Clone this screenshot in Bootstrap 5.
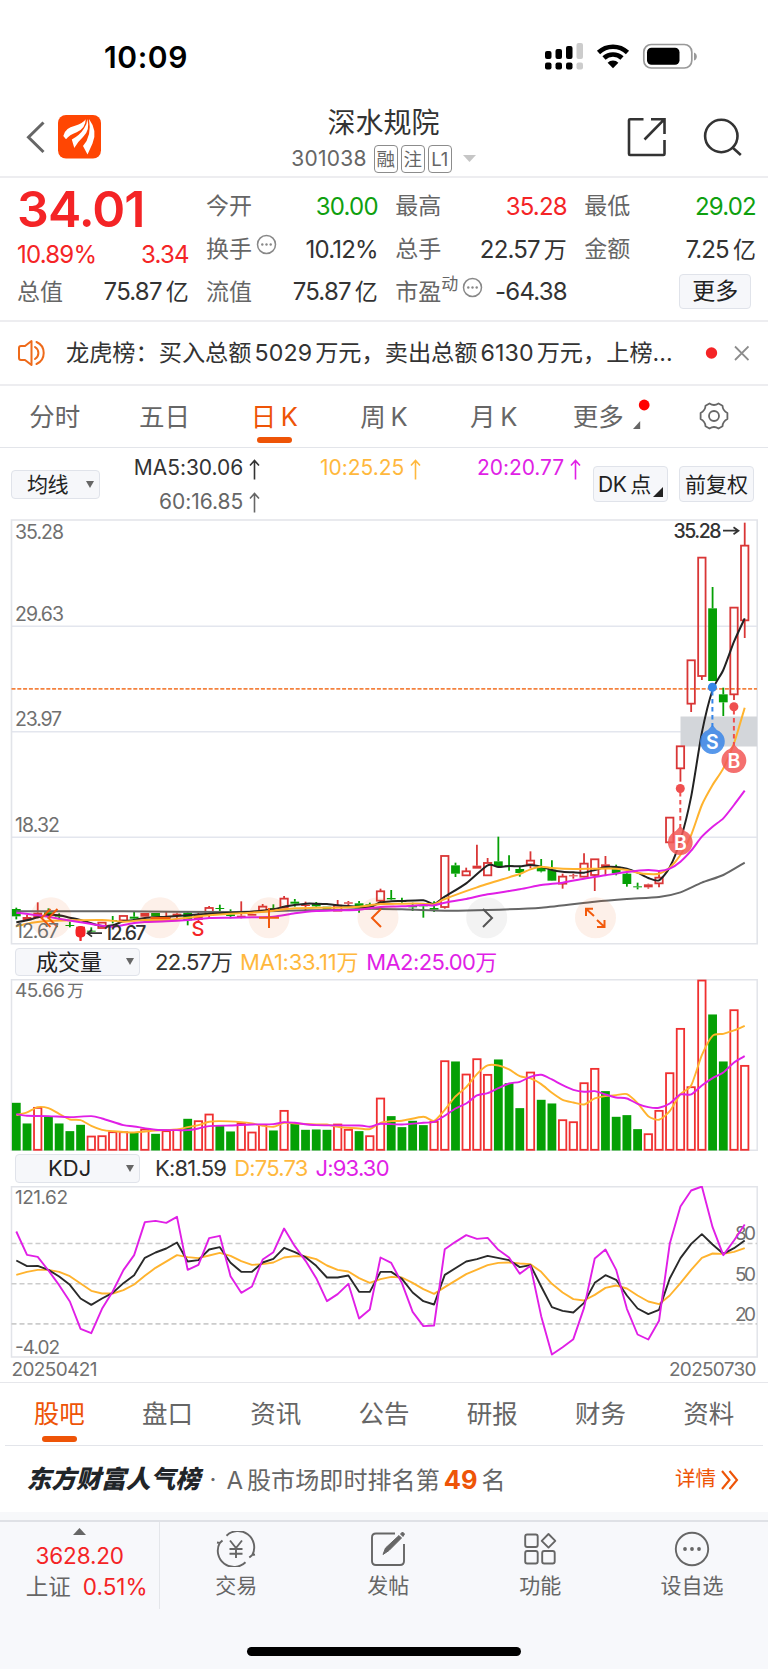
<!DOCTYPE html>
<html lang="zh-CN">
<head>
<meta charset="utf-8">
<meta name="viewport" content="width=device-width, initial-scale=1">
<title>深水规院 301038</title>
<link href="https://cdn.jsdelivr.net/npm/bootstrap@5.3.0/dist/css/bootstrap.min.css" rel="stylesheet">
<style>
:root{--ink:#333;--soft:#666;--up:#f42426;--down:#0fa00f;--brand:#ee5407;--ma10:#ffb83d;--ma20:#e01fe6;--rule:#e9eaee;--fill:#f6f7fa}
body{width:768px;height:1669px;overflow:hidden;background:#fff;color:var(--ink);font-family:Inter,"Noto Sans CJK SC",sans-serif;line-height:1;font-size:23px}
svg{display:block;flex:none}
.up{color:var(--up)}.down{color:var(--down)}.soft{color:var(--soft)}.brand{color:var(--brand)}
.statusbar{height:100px;padding:14px 71px 0 104px}
.clock{font-size:30px;font-weight:600;letter-spacing:.6px;color:#000}
.topbar{height:78px;border-bottom:2px solid #ededf0;padding:0 25px 0 26px}
.title{font-size:28px;line-height:32px}
.code{font-size:21px;gap:3px;letter-spacing:.25px}
.chip{border:1.5px solid #8c8c8c;border-radius:4px;width:24px;height:27.5px;font-size:18.5px;letter-spacing:0}
.quote{height:144px;border-bottom:2px solid #ededf0;display:grid;grid-template-columns:repeat(4,171.7px);column-gap:17.4px;padding:7.5px 0 0 17px;align-content:start}
.cell{height:42.7px;letter-spacing:-.8px}
.cell>span:first-child{letter-spacing:0}
.unit{margin-left:4px;letter-spacing:0}
.num{font-size:24px}
.price{font-size:50px;font-weight:600;letter-spacing:-.9px;height:46px}
.pill{background:var(--fill);border:1.5px solid #e0e3ea;border-radius:4px;color:#222}
.news{height:63.5px;border-bottom:2px solid #ededf0;padding:1px 19px 0 18px;font-size:23.2px}
.news .nm{margin:0 3px;letter-spacing:.1px}
.tabs{height:62.5px;font-size:25.5px;word-spacing:-2.5px}
.tabs>div{flex:1 1 0;height:100%;position:relative}
.tabs .on{color:var(--brand)}
.tabs .on::after{content:"";position:absolute;bottom:4px;width:35px;height:6px;border-radius:3px;background:var(--brand)}
.period{border-bottom:1.5px solid #e3e5ea}
.period .on::after{left:37.5px}
.boards{border-top:1.5px solid #e6e7eb;height:64.5px}
.boards .tabs{height:63px;margin:0 5px;border-bottom:1.5px solid #e3e5ea}
.boards .on::after{left:37px;bottom:2.5px}
.ma{height:70.5px;font-size:21px;letter-spacing:-.5px}
.ma .avgs{width:482px;padding-top:9px;letter-spacing:-.05px}
.ma .avgs div{height:33.5px;white-space:nowrap}
.subhead{height:34.5px;padding:0 15px;font-size:22px}
.subhead .pill{width:125px;height:28.5px;margin-right:15px}
.subhead .vals{letter-spacing:-.6px;gap:8px}
.rank{height:66px;padding:1px 29px 0 26.5px;font-size:24px}
.slogan{font-size:24.8px;font-weight:900;font-style:italic}
.dock{background:#f7f8fb;border-top:2px solid #dfe1e6;height:149px}
.dock .idx{width:160.5px;height:87px;border-right:1.5px solid #e4e6ea}
.dock .act{width:152px;height:87px;font-size:21px;color:var(--soft)}
.homebar{width:274px;height:9px;border-radius:5px;background:#000;margin:37.5px auto 0}
</style>
</head>
<body class="d-flex flex-column m-0">

<div class="statusbar d-flex align-items-center justify-content-between flex-shrink-0">
  <div class="clock">10:09</div>
  <svg width="153" height="28" viewBox="544 43 153 28">
    <g><rect x="545" y="51" width="6.5" height="8" rx="2"/><rect x="555.5" y="49" width="6.5" height="10" rx="2"/><rect x="566" y="46" width="6.5" height="13" rx="2"/><rect x="576.5" y="43" width="6.5" height="16" rx="2" fill="#ccc"/>
    <rect x="545" y="62.5" width="6.5" height="7" rx="2"/><rect x="555.5" y="62.5" width="6.5" height="7" rx="2"/><rect x="566" y="62.5" width="6.5" height="7" rx="2"/><rect x="576.5" y="62.5" width="6.5" height="7" rx="2" fill="#ccc"/></g>
    <path d="M598.5 52.5A21 21 0 0 1 627.5 52.5M604 58A13.2 13.2 0 0 1 622 58" fill="none" stroke="#000" stroke-width="4.6"/>
    <path d="M613 68.2L607.6 62.7A7.8 7.8 0 0 1 618.4 62.7Z"/>
    <rect x="643.8" y="44.5" width="48" height="23.5" rx="7.5" fill="none" stroke="#999" stroke-width="1.7"/><rect x="647" y="47.7" width="32.5" height="17" rx="4.5"/><path d="M694 52.5q2.8 1 2.8 4t-2.8 4z" fill="#999"/>
  </svg>
</div>

<div class="topbar d-flex align-items-center justify-content-between flex-shrink-0">
  <svg width="76" height="46" viewBox="26 115 76 46">
    <path d="M43.5 122.5L28.5 137.3L43.5 152" fill="none" stroke="#666" stroke-width="3"/>
    <rect x="58" y="115" width="43" height="43.5" rx="8" fill="#ff4603"/>
    <path d="M63.300 136Q65 127.700 75 125.700Q82.700 123.700 85.700 119.300Q85.700 128.300 76.700 132.300Q69.300 135 66 139.300ZM74.300 148L71.800 139.500Q80 135 84 128.500Q87.300 123.500 87.300 119Q90.500 130 83 137Q77.500 142 74.300 148ZM87.500 154.500L83 146Q92 136 89 119Q98 131 92.500 143.500Z" fill="#fff"/>
  </svg>
  <div class="d-flex flex-column align-items-center" style="margin-left:38px">
    <div class="title mb-1" style="margin-top:3.500px">深水规院</div>
    <div class="code soft d-flex align-items-center" style="padding-top:2px"><span class="me-1">301038</span><span class="chip d-flex align-items-center justify-content-center">融</span><span class="chip d-flex align-items-center justify-content-center">注</span><span class="chip d-flex align-items-center justify-content-center">L1</span><svg class="ms-2" width="13" height="7" viewBox="0 0 13 7"><path d="M0 0H13L6.500 7Z" fill="#c6c6c6"/></svg></div>
  </div>
  <svg width="116" height="46" viewBox="626 115 116 46" fill="none" stroke="#333" stroke-width="2.6">
    <path d="M642.500 119.200H629q-1 0-1 1V154q0 1 1 1H662.500q1 0 1-1V140M650 119.200H663.500V134M663 119.700L643.500 139.500"/>
    <circle cx="720.3" cy="136" r="16.200"/><path d="M731.500 147.500L739.800 155"/>
  </svg>
</div>

<div class="quote flex-shrink-0">
  <div style="grid-row:1/3;height:85.400px">
    <div class="price up d-flex align-items-center">34.01</div>
    <div class="up num d-flex justify-content-between align-items-center" style="height:47px;letter-spacing:-.8px"><span>10.89%</span><span>3.34</span></div>
  </div>
  <div class="cell d-flex justify-content-between align-items-center"><span class="soft">今开</span><span class="num down">30.00</span></div>
  <div class="cell d-flex justify-content-between align-items-center"><span class="soft">最高</span><span class="num up">35.28</span></div>
  <div class="cell d-flex justify-content-between align-items-center"><span class="soft">最低</span><span class="num down">29.02</span></div>
  <div class="cell d-flex justify-content-between align-items-center"><span class="soft d-flex">换手<svg class="ms-1" width="21" height="21" viewBox="0 0 21 21" style="margin-top:-4px"><use href="#more-dots"/></svg></span><span class="num">10.12%</span></div>
  <div class="cell d-flex justify-content-between align-items-center"><span class="soft">总手</span><span><span class="num">22.57</span><span class="unit">万</span></span></div>
  <div class="cell d-flex justify-content-between align-items-center"><span class="soft">金额</span><span><span class="num">7.25</span><span class="unit">亿</span></span></div>
  <div class="cell d-flex justify-content-between align-items-center"><span class="soft">总值</span><span><span class="num">75.87</span><span class="unit">亿</span></span></div>
  <div class="cell d-flex justify-content-between align-items-center"><span class="soft">流值</span><span><span class="num">75.87</span><span class="unit">亿</span></span></div>
  <div class="cell d-flex justify-content-between align-items-center"><span class="soft d-flex">市盈<small style="font-size:17px;margin-top:-5px">动</small><svg width="21" height="21" viewBox="0 0 21 21" style="margin:-4px 0 0 4px"><use href="#more-dots"/></svg></span><span class="num">-64.38</span></div>
  <div class="cell d-flex justify-content-end align-items-center"><span class="pill d-flex align-items-center justify-content-center" style="width:72.500px;height:35px;margin-right:4.500px;margin-top:-2px">更多</span></div>
</div>

<div class="news d-flex align-items-center flex-shrink-0">
  <svg width="31" height="28" viewBox="18 339.500 31 28" fill="none" stroke="#ee6a1a" stroke-width="2" stroke-linejoin="round"><path d="M31.500 341.500V365.500L25 360.500H21Q19 360.500 19 358.500V348.500Q19 346.500 21 346.500H25ZM35 347.500A7 7 0 0 1 35 359.500M36.500 342.500A12 12 0 0 1 36.500 364.500" stroke-linecap="round"/></svg>
  <span style="margin-left:17px;white-space:nowrap">龙虎榜：买入总额<span class="nm">5029</span>万元，卖出总额<span class="nm">6130</span>万元，上榜...</span>
  <svg class="ms-auto" width="46" height="16" viewBox="702 345.500 46 16"><circle cx="710.500" cy="353.500" r="5.700" fill="#f42426"/><path d="M735.500 347L749 360.500M749 347L735.500 360.500" stroke="#8c8c8c" stroke-width="1.800" transform="translate(-1.500)"/></svg>
</div>

<div class="tabs period soft d-flex flex-shrink-0">
  <div class="d-flex align-items-center justify-content-center">分时</div>
  <div class="d-flex align-items-center justify-content-center">五日</div>
  <div class="on d-flex align-items-center justify-content-center">日 K</div>
  <div class="d-flex align-items-center justify-content-center">周 K</div>
  <div class="d-flex align-items-center justify-content-center">月 K</div>
  <div class="d-flex align-items-center justify-content-center"><span style="margin-left:16px">更多</span><svg style="margin-left:8.500px" width="18" height="36" viewBox="632 399 18 36"><circle cx="644.200" cy="406" r="5.400" fill="red"/><path d="M640.200 422V430H633Z" fill="#666"/></svg></div>
  <div class="d-flex align-items-center justify-content-center"><svg width="32" height="30" viewBox="-17 -15 32 30" fill="none" stroke="#666" stroke-width="1.800"><path d="M-4.500-12.500Q0-9.500 4.500-12.500L8.500-10.300Q8.700-5.500 13.400-3V3Q8.700 5.500 8.500 10.300L4.500 12.500Q0 9.500-4.500 12.500L-8.500 10.300Q-8.700 5.500-13.400 3V-3Q-8.700-5.500-8.500-10.300Z" stroke-linejoin="round"/><circle r="5"/></svg></div>
</div>

<div class="ma d-flex flex-shrink-0">
  <div class="pill d-flex align-items-center justify-content-between" style="width:89px;height:29px;margin:21.500px 0 0 11px;padding:0 5px 0 15px"><span>均线</span><svg width="8" height="7" viewBox="0 0 8 7"><path d="M0 0H8L4 7Z" fill="#666"/></svg></div>
  <div class="avgs d-flex">
    <div class="text-end" style="width:160px"><div>MA5:30.06 <svg class="d-inline-block" width="11" height="21" viewBox="0 0 11 21"><use href="#arrow-up"/></svg></div><div class="soft">60:16.85 <svg class="d-inline-block" width="11" height="21" viewBox="0 0 11 21"><use href="#arrow-up"/></svg></div></div>
    <div class="text-end" style="width:161px;color:var(--ma10)">10:25.25 <svg class="d-inline-block" width="11" height="21" viewBox="0 0 11 21"><use href="#arrow-up"/></svg></div>
    <div class="text-end" style="width:160px;color:var(--ma20)">20:20.77 <svg class="d-inline-block" width="11" height="21" viewBox="0 0 11 21"><use href="#arrow-up"/></svg></div>
  </div>
  <div class="pill d-flex align-items-center position-relative" style="width:75px;height:36px;margin:18px 11px 0 11px;padding-left:4px;word-spacing:-2px;letter-spacing:-.3px">DK 点<svg class="position-absolute end-0 bottom-0 me-1 mb-1" width="10" height="10" viewBox="0 0 10 10"><path d="M10 0V10H0Z" fill="#222"/></svg></div>
  <div class="pill d-flex align-items-center justify-content-center" style="width:75px;height:36px;margin-top:18px;letter-spacing:0">前复权</div>
</div>

<svg id="kline" width="768" height="426" viewBox="0 519 768 426" font-size="19.500">
  <g fill="none" stroke="#e3e6ee" stroke-width="1.600"><path d="M11.500 626.300H757M11.500 731.700H757M11.500 837.300H757"/><path d="M11.500 520V943.800H757.200V520Z" stroke="#e2e4e9"/></g>
  <rect x="680.500" y="716.500" width="76.500" height="30" fill="#d3d6da"/>
  <path d="M11.500 688.800H757" stroke="#f4823f" stroke-width="1.700" stroke-dasharray="4 1.800"/>
  <g class="candles"></g><g class="lines" fill="none" stroke-width="2" stroke-linejoin="round"></g>
  <g fill="#ee5407" fill-opacity=".09"><circle cx="51" cy="917.700" r="20.500"/><circle cx="160" cy="917.700" r="20.500"/><circle cx="269" cy="917.700" r="20.500"/><circle cx="378" cy="917.700" r="20.500"/><circle cx="595.500" cy="917.700" r="20.500"/><circle cx="486.700" cy="917.700" r="20.500" fill="#333" fill-opacity=".06"/></g>
  <g fill="none" stroke="#f25a0c" stroke-width="2"><path d="M50.500 909L41.500 918L50.500 927M57.500 909L48.500 918L57.500 927M150.500 918H170M259 917.700H279M269 908V928M381 909L372 918L381 927"/><path d="M586 916V908.800H593M586.500 909.200L594 916M604.500 920V927H597M604 926.600L597 920"/><path d="M483 909L492 918L483 927" stroke="#555"/></g>
  <g fill="#707070"><text x="15" y="539" textLength="49">35.28</text><text x="15" y="620.500" textLength="49">29.63</text><text x="15" y="726" textLength="47">23.97</text><text x="15" y="832" textLength="45">18.32</text><text x="15" y="938" textLength="44">12.67</text></g>
  <g fill="#333" font-weight="500"><text x="673.500" y="537.500" textLength="48">35.28</text><text x="104" y="939.700" textLength="42.500">12.67</text></g>
  <path d="M723 530.700H738M733.500 527.200L738.500 530.700L733.500 534.200M102 933.200H88M92 929.800L87.500 933.200L92 936.600" fill="none" stroke="#333" stroke-width="1.700"/>
  <path d="M75.500 930.500q0-4.500 5-4.500t5 4.500v2.500q0 4-4 4.500v3.300h-2v-3.300q-4-.5-4-4.500z" fill="#f42426"/>
  <text x="191.500" y="935.500" fill="#f42426" font-size="20" font-weight="500">S</text>
  <g stroke-width="2" stroke-dasharray="4.500 3.500"><path d="M680.300 792V829M733.900 710V746" stroke="#ef4f4f"/><path d="M712.400 691V727" stroke="#3585e8"/></g>
  <circle cx="680.300" cy="788.500" r="4.500" fill="#ef4f4f"/><circle cx="733.900" cy="706.800" r="4.500" fill="#ef4f4f"/><circle cx="712.400" cy="687.300" r="4.500" fill="#3585e8"/>
  <g fill-opacity=".85" font-size="19.500" font-weight="600"><g fill="#f25756"><path d="M680.300 826l4.500 5a12.400 12.400 0 1 1-9 0z"/><path d="M733.900 744l4.500 5a12.400 12.400 0 1 1-9 0z"/></g><path d="M712.400 725l4.500 5a12.400 12.400 0 1 1-9 0z" fill="#3a86e8"/>
  <g fill="#fff" fill-opacity="1" text-anchor="middle"><text x="680.500" y="850">B</text><text x="734" y="768">B</text><text x="712.400" y="749">S</text></g></g>
</svg>

<div class="subhead d-flex align-items-center flex-shrink-0">
  <div class="pill d-flex align-items-center" style="padding:0 5px 0 20px">成交量<svg class="ms-auto" width="8" height="7" viewBox="0 0 8 7"><path d="M0 0H8L4 7Z" fill="#666"/></svg></div>
  <div class="vals d-flex"><span>22.57万</span><span style="color:var(--ma10);letter-spacing:-.25px">MA1:33.11万</span><span style="color:var(--ma20)">MA2:25.00万</span></div>
</div>

<svg id="volume" width="768" height="172" viewBox="0 979.200 768 172" font-size="19">
  <path d="M11.500 980V1150.500H757.200V980Z" fill="none" stroke="#e2e4e9" stroke-width="1.500"/>
  <text x="15" y="997.500" fill="#707070"><tspan textLength="50">45.66</tspan><tspan x="67" font-size="17">万</tspan></text>
  <g class="bars"></g><g class="lines" fill="none" stroke-width="1.900" stroke-linejoin="round"></g>
</svg>

<div class="subhead d-flex align-items-center flex-shrink-0">
  <div class="pill d-flex align-items-center" style="padding:0 5px 0 32px">KDJ<svg class="ms-auto" width="8" height="7" viewBox="0 0 8 7"><path d="M0 0H8L4 7Z" fill="#666"/></svg></div>
  <div class="vals d-flex" style="letter-spacing:-.8px"><span>K:81.59</span><span style="color:var(--ma10)">D:75.73</span><span style="color:var(--ma20)">J:93.30</span></div>
</div>

<svg id="kdj" width="768" height="196" viewBox="0 1185.500 768 196" font-size="19" fill="#707070">
  <path d="M11.500 1186.200V1356.500H757.200V1186.200Z" fill="none" stroke="#e2e4e9" stroke-width="1.500"/>
  <path d="M11.500 1243H757M11.500 1283.200H757M11.500 1323.400H757" stroke="#ccc" stroke-width="1.600" stroke-dasharray="5 3"/>
  <text x="15" y="1203.500" textLength="53">121.62</text><text x="15" y="1353" textLength="45">-4.02</text>
  <text x="735" y="1239" textLength="21">80</text><text x="735" y="1280" textLength="21">50</text><text x="735" y="1320.500" textLength="21">20</text>
  <text x="11.500" y="1375.500" textLength="86">20250421</text><text x="669" y="1375.500" textLength="87.500">20250730</text>
  <g class="lines" fill="none" stroke-width="1.900" stroke-linejoin="round"></g>
</svg>

<div class="boards flex-shrink-0"><div class="tabs soft d-flex">
  <div class="on d-flex align-items-center justify-content-center">股吧</div>
  <div class="d-flex align-items-center justify-content-center">盘口</div>
  <div class="d-flex align-items-center justify-content-center">资讯</div>
  <div class="d-flex align-items-center justify-content-center">公告</div>
  <div class="d-flex align-items-center justify-content-center">研报</div>
  <div class="d-flex align-items-center justify-content-center">财务</div>
  <div class="d-flex align-items-center justify-content-center">资料</div>
</div></div>

<div class="rank soft d-flex align-items-center flex-shrink-0">
  <span class="slogan text-dark">东方财富人气榜</span><span style="margin:0 10px 0 9.500px">·</span><span style="word-spacing:-3px;letter-spacing:.1px">A 股市场即时排名第 <b class="brand" style="font-size:25.500px">49</b> 名</span>
  <span class="brand ms-auto d-flex align-items-center" style="font-size:20.500px">详情<svg style="margin-left:5px" width="18" height="20" viewBox="0 0 18 20" fill="none" stroke="#ee5407" stroke-width="2.100"><path d="M1 1L8.500 10L1 19M8.500 1L16 10L8.500 19"/></svg></span>
</div>
<div class="flex-shrink-0" style="height:8px;background:#f7f8fa"></div>

<div class="dock flex-shrink-0">
  <div class="d-flex">
    <div class="idx d-flex flex-column align-items-center"><svg style="margin-top:6px" width="13" height="7" viewBox="0 0 13 7"><path d="M6.500 0L13 7H0Z" fill="#666"/></svg>
      <div class="up" style="margin-top:9.500px;font-size:22.500px;letter-spacing:-.15px">3628.20</div>
      <div class="d-flex align-items-center" style="margin-top:8.500px;margin-left:14px"><span class="soft" style="font-size:22.500px">上证</span><span class="up" style="font-size:22.500px;letter-spacing:0;margin-left:12px">0.51%</span></div></div>
    <div class="act d-flex flex-column align-items-center"><svg style="margin-top:9px" width="40" height="36" viewBox="-20 -18 40 36" fill="none" stroke="#666" stroke-width="1.900"><path d="M-9.500-13.300A16.300 16.300 0 0 1 16.300 6M16.300 6L13.300 8.500M16.300 6L19 5.500M9.500 13.300A16.300 16.300 0 0 1-16.300-6M-16.300-6L-13.500-8.500M-16.300-6L-19-6.500M-6-8.500L0-1L6-8.500M0-1V9M-6.500 0H6.500M-6.500 4.800H6.500"/></svg><span style="margin-top:8px">交易</span></div>
    <div class="act d-flex flex-column align-items-center"><svg style="margin-top:9px" width="36" height="36" viewBox="-18 -18 36 36" fill="none" stroke="#666" stroke-width="1.900"><path d="M7-15.500H-12Q-16-15.500-16-11.500V12Q-16 16-12 16H12Q16 16 16 12V-5"/><path d="M-5 5.500L-2.500-1L11-13.500L13.500-11L1 1.500ZM12.500-15L14.500-17L16.500-15L15-12.500Z" fill="#666" stroke-width="1"/></svg><span style="margin-top:8px">发帖</span></div>
    <div class="act d-flex flex-column align-items-center"><svg style="margin-top:9px" width="36" height="36" viewBox="-18 -18 36 36" fill="none" stroke="#666" stroke-width="1.900"><rect x="-14.800" y="-14.500" width="12.500" height="12.500" rx="2"/><rect x="-14.800" y="2" width="12.500" height="12.500" rx="2"/><rect x="2.200" y="2" width="12.500" height="12.500" rx="2"/><path d="M8.500-15L15.300-8.200L8.500-1.400L1.700-8.200Z" stroke-linejoin="round"/></svg><span style="margin-top:8px">功能</span></div>
    <div class="act d-flex flex-column align-items-center"><svg style="margin-top:9px" width="36" height="36" viewBox="-18 -18 36 36"><circle r="16.200" fill="none" stroke="#666" stroke-width="1.900"/><g fill="#666"><circle cx="-7" r="1.900"/><circle r="1.900"/><circle cx="7" r="1.900"/></g></svg><span style="margin-top:8px">设自选</span></div>
  </div>
  <div class="homebar"></div>
</div>

<svg width="0" height="0" class="position-absolute"><defs>
  <g id="more-dots"><circle cx="10.500" cy="10.500" r="9" fill="none" stroke="#888" stroke-width="1.500"/><g fill="#888"><circle cx="6.300" cy="10.500" r="1.200"/><circle cx="10.500" cy="10.500" r="1.200"/><circle cx="14.700" cy="10.500" r="1.200"/></g></g>
  <path id="arrow-up" d="M5.500 20.500V1.500M1 6.500L5.500 1.500L10 6.500" fill="none" stroke="currentColor" stroke-width="1.600"/>
</defs></svg>

<script src="https://cdn.jsdelivr.net/npm/bootstrap@5.3.0/dist/js/bootstrap.bundle.min.js"></script>
<script>
const NS='http://www.w3.org/2000/svg', RED='#d93636', GREEN='#05a005';
const X=i=>16.3+i*10.712;
function put(parent,tag,attrs){const e=document.createElementNS(NS,tag);for(const k in attrs)e.setAttribute(k,attrs[k]);parent.appendChild(e);}
// Each trace is a list of "index:value" pairs; values are thirds of a pixel below the base.
function trace(sel,color,parts){
  const pts=[];
  parts.forEach(([base,s])=>s.split(' ').forEach(p=>{const [i,v]=p.split(':').map(Number);pts.push([X(i),base+v/3]);}));
  let d=`M${pts[0]}`;
  for(let k=0;k<pts.length-1;k++){
    const a=pts[Math.max(k-1,0)],b=pts[k],c=pts[k+1],e=pts[Math.min(k+2,pts.length-1)],t=sel==='#kdj'?0:.12;
    d+=`C${b[0]+(c[0]-a[0])*t} ${b[1]+(c[1]-a[1])*t} ${c[0]-(e[0]-b[0])*t} ${c[1]-(e[1]-b[1])*t} ${c[0]} ${c[1]}`;
  }
  put(document.querySelector(sel+' .lines'),'path',{d,stroke:color});
}
// Candles: type (g green, r hollow red, f filled red), body top, body bottom, high, low
const candles=[
 [0,840,'g207,229,203,238 f231,241,225,241 f218,234,187,235 g217,228,205,235 g225,230,220,238 g255,258,245,262 f260,288,258,303 g272,275,262,278 r247,264,247,264 g240,243,228,250 r227,241,227,241 g230,236,215,243 f219,230,219,230 g219,229,219,229 f231,237,213,243 f221,228,218,236 g218,241,215,256 f225,240,218,245 r203,225,198,237 g204,207,194,215 g223,228,208,235 f227,232,184,235 f222,227,222,227 r199,212,192,212 g204,207,193,215 r175,203,168,203 g185,191,177,200 f194,198,185,210 g192,199,186,204 g200,208,200,208 r196,212,180,212 f187,191,183,198 g190,205,183,218 g193,205,188,208 r153,182,146,195'],
 [35,800,'g294,298,270,300 g301,306,293,308 g315,322,308,333 g315,319,315,353 g324,329,304,336 r167,321,167,326 g196,221,188,231 r213,226,203,228 f197,206,134,206 r188,226,174,226 g184,198,110,198 g196,199,166,212 g207,219,198,230 r181,193,154,205 g204,214,177,217 g209,242,181,243 r229,251,221,266 f226,229,221,236 r190,230,160,232 r177,225,177,273 f193,202,168,225 g200,220,194,226 g221,252,218,260 g259,262,248,268 f253,262,251,266 r232,250,212,262 r52,127,52,127'],
 [62,510,'r708,775,708,815 r450,581,450,606 r142,498,142,510 g295,513,231,513 g553,577,533,618 r292,553,292,570 r106,331,38,384']
];
const cg=document.querySelector('#kline .candles');
candles.forEach(([from,base,s])=>s.split(' ').forEach((c,k)=>{
  const x=X(from+k),t=c[0],[a,b,h,l]=c.slice(1).split(',').map(v=>base+v/3),col=t==='g'?GREEN:RED;
  if(h<a)put(cg,'path',{d:`M${x} ${h}V${a}`,stroke:col,'stroke-width':1.8});
  if(l>b)put(cg,'path',{d:`M${x} ${b}V${l}`,stroke:col,'stroke-width':1.8});
  if(t==='r')put(cg,'rect',{x:x-3.7,y:a+.3,width:7.4,height:b-a-.3,fill:'none',stroke:col,'stroke-width':1.8});
  else put(cg,'rect',{x:x-4.4,y:a,width:8.8,height:b-a,fill:col});
}));
trace('#kline','#666',[[840,'0:214 10:214 20:216 25:212 30:210 33:206'],[800,'36:328 40:332 44:330 49:323 54:305 57:297 60:291 62:277 64:248 66:225 68:188']]);
trace('#kline','#222',[[840,'0:247 1:241 2:232 3:225 4:226 5:233 6:240 7:250 8:258 9:256 10:244 11:240 12:234 14:230 16:226 18:221 20:218 22:215 24:208 25:200 26:195 27:191 28:191 29:192 30:196 32:200 33:202 34:187'],[800,'35:304 36:303 38:301 39:312 40:290 42:250 44:196 45:201 46:198 47:199 48:195 49:200 50:210 51:215 52:217 53:218 54:210 55:201 56:201 57:206 58:218 59:234 60:241'],[510,'61:1072 62:990 63:860 64:668 65:540 66:480 67:395 68:325']]);
trace('#kline','#ffb32e',[[840,'0:259 1:251 2:246 3:243 5:241 8:240 10:245 12:240 14:240 16:233 18:226 20:221 22:218 24:212 26:205 28:203 30:203 32:200 34:192'],[800,'36:311 38:311 39:313 40:297 43:262 46:232 47:222 48:208 49:200 50:204 52:207 54:206 56:206 57:210 58:218 59:222 60:221'],[510,'61:1073 62:1035 63:975 64:885 65:825 66:775 67:700 68:593']]);
trace('#kline','#e01fe6',[[840,'0:218 2:226 4:236 6:247 7:252 8:257 9:260 10:255 11:249 12:246 14:244 16:240 18:234 20:233 22:232 24:230 26:220 28:213 30:211 32:209 34:201'],[800,'36:319 38:315 39:316 40:308 42:297 44:283 47:268 49:255 51:248 53:236 55:226 57:216 59:210 60:213'],[510,'61:1076 62:1055 63:1022 64:980 65:950 66:925 67:885 68:842']]);

const vol='g399 g461 r413 g441 g461 g484 g465 r499 r498 r486 r486 g487 r478 g492 r483 r479 g447 r453 r433 g467 g485 r459 r487 r464 g482 r422 g461 g480 g479 g480 r463 r479 g484 r498 r385 g439 g472 g453 g466 r455 r273 g275 r313 r267 r314 g269 g340 g415 r307 g390 g401 r450 r456 r339 r296 g364 g441 g436 g478 r492 r422 r309 r176 r351 r31 g134 g275 r120 r287';
const vg=document.querySelector('#volume .bars');
vol.split(' ').forEach((c,i)=>{
  const y=970+c.slice(1)/3,x=X(i);
  if(c[0]==='r')put(vg,'rect',{x:x-3.7,y:y+.4,width:7.4,height:1150-y-.4,fill:'none',stroke:'#f03030','stroke-width':1.8});
  else put(vg,'rect',{x:x-4.4,y,width:8.8,height:1150.7-y,fill:'#05a005'});
});
trace('#volume','#ffb32e',[[970,'0:436 1:428 2:412 3:415 4:432 5:449 6:451 7:468 8:480 9:484 11:488 13:482 15:479 16:472 17:466 18:456 19:454 21:457 22:461 23:468 24:471 25:459 26:461 28:464 29:464 30:471 31:474 32:476 33:478 34:459 35:454 36:453 38:441 39:453 40:420 41:380 42:352 43:313 44:287 45:287 46:299 47:319 48:326 49:343 50:369 51:390 52:398 53:404 54:386 55:379 56:376 57:373 58:400 59:439 60:450 61:424 62:373 63:347 64:256 65:198 66:192 67:182 68:168']]);
trace('#volume','#e01fe6',[[970,'0:433 1:438 3:439 5:442 7:439 8:446 10:466 11:470 13:480 15:481 16:481 17:476 18:469 20:467 22:464 24:463 25:457 26:459 28:466 32:467 33:471 34:462 36:464 38:459 39:456 40:438 41:416 42:401 43:377 44:370 45:355 46:341 47:336 48:321 49:315 50:329 51:346 52:360 53:366 54:364 55:374 56:383 57:386 58:402 59:412 60:414 61:401 62:374 63:374 64:347 65:325 66:308 67:278 68:259']]);

trace('#kdj','#ffb32e',[[1150,'0:373 1:364 2:358 3:358 4:364 5:377 6:399 7:421 8:429 9:429 10:419 11:402 12:376 13:352 15:314 16:320 17:323 18:315 19:307 20:316 21:332 22:343 23:341 24:336 25:321 26:317 27:318 28:326 29:345 30:358 31:363 32:383 33:397 34:386 35:379 36:381 37:397 38:416 39:430 40:410 42:371 44:344 45:337 46:336 47:339 48:341 49:364 50:400 51:426 52:446 53:450 54:433 55:412 56:405 57:414 58:435 59:453 60:461 61:435 62:398 63:358 64:322 65:309 66:310 67:304 68:293']]);
trace('#kdj','#2a2a2a',[[1150,'0:330 1:347 2:346 3:358 4:378 5:403 6:444 7:463 8:444 9:427 10:398 11:374 12:322 13:306 14:294 15:276 16:333 17:329 18:297 19:290 20:337 21:364 22:364 23:336 24:325 25:292 26:305 27:320 28:346 29:381 30:381 31:375 32:424 33:424 34:364 35:364 36:385 37:426 38:452 39:462 40:373 42:333 43:326 44:316 46:329 47:350 48:344 49:408 50:470 51:481 52:486 53:457 54:397 55:374 56:388 57:435 58:474 59:491 60:478 61:384 62:323 63:280 64:251 65:282 66:310 67:293 68:270']]);
trace('#kdj','#e01fe6',[[1150,'0:243 1:313 2:319 3:360 4:404 5:453 6:535 7:548 8:475 9:423 10:359 11:314 12:215 13:211 14:217 15:199 16:358 17:343 18:263 19:256 20:377 21:427 22:408 23:327 24:305 25:234 26:287 27:331 28:383 29:452 30:431 31:400 32:504 33:477 34:321 35:337 36:398 37:484 38:527 39:525 40:296 41:274 42:254 43:265 44:262 45:298 46:321 47:370 48:346 49:497 50:612 51:590 52:566 53:472 54:324 55:297 56:358 57:475 58:552 59:567 60:511 61:280 62:168 63:120 64:108 65:230 66:314 67:270 68:222']]);
</script>
</body>
</html>
